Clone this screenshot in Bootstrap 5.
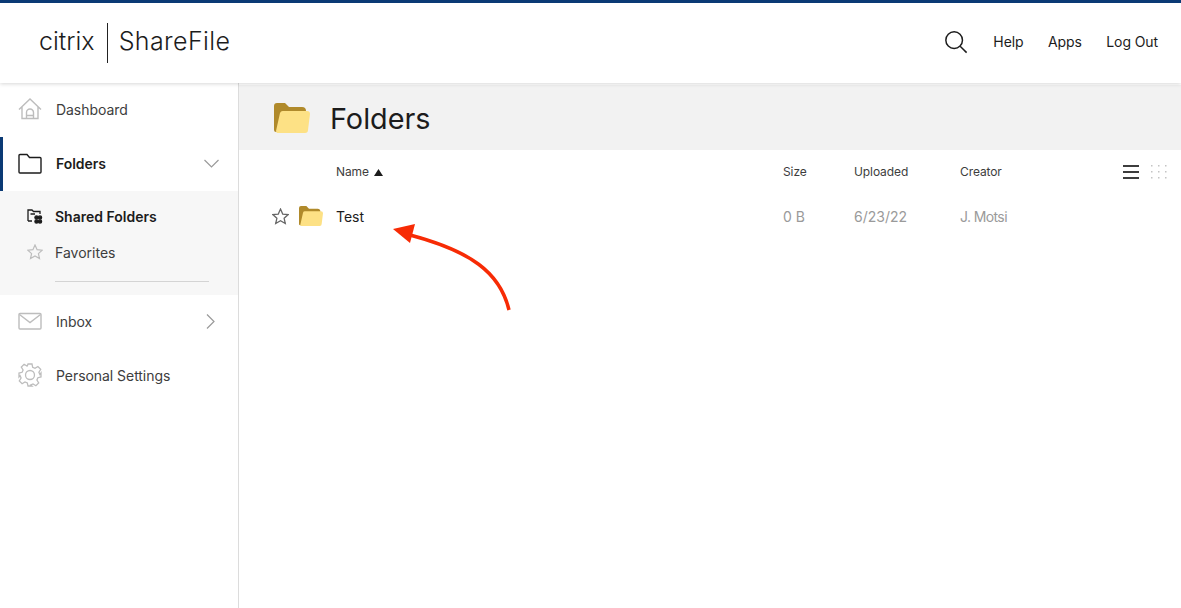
<!DOCTYPE html>
<html lang="en">
<head>
<meta charset="utf-8" />
<meta name="viewport" content="width=device-width, initial-scale=1" />
<title>ShareFile</title>
<link href="https://cdn.jsdelivr.net/npm/bootstrap@5.3.3/dist/css/bootstrap.min.css" rel="stylesheet" />
<style>
  html, body { height: 100%; overflow: hidden; }
  body { font-family: Inter, "Liberation Sans", sans-serif; font-size: 14px; color: #1c1c1c; background: #fff; }
  .sf-page { position: relative; height: 608px; }
  .sf-top { height: 83px; border-top: 3px solid #0b3a75; padding: 0 23px 4px 39px; box-shadow: 0 1px 4px rgba(0,0,0,.16); position: relative; z-index: 2; background: #fff; }
  .sf-citrix { font-size: 25px; font-weight: 300; letter-spacing: 0; line-height: 1; }
  .sf-divider { width: 1px; height: 40px; background: #222; margin: 4px 11px 0 12px; }
  .sf-product { font-size: 25px; font-weight: 300; line-height: 1; letter-spacing: .4px; }
  .sf-toplinks { gap: 24.500px; letter-spacing: -.1px; }
  .sf-toplinks a { color: #1c1c1c; text-decoration: none; }
  .sf-search { margin: 2px 1px 0 0; }
  .sf-body { height: 525px; }
  .sf-side { width: 239px; flex: none; border-right: 1px solid #dcdcdc; }
  .sf-item { height: 54px; padding: 0 19px 2px 18px; color: #3d3d3d; text-decoration: none; letter-spacing: -.05px; }
  .sf-item svg.sf-ico { width: 24px; height: 24px; margin-right: 14px; flex: none; }
  .sf-item.sf-on { box-shadow: inset 3px 0 0 #0b3a75; color: #1c1c1c; font-weight: 600; }
  .sf-chev-r { margin-right: 4px; }
  .sf-sub { background: #f7f7f7; height: 104px; padding: 8px 29px 0 27px; }
  .sf-subitem { height: 36px; padding-bottom: 2px; color: #3d3d3d; }
  .sf-subitem svg { width: 16px; height: 16px; margin-right: 12px; flex: none; }
  .sf-subitem.sf-on { color: #1c1c1c; font-weight: 600; }
  .sf-rule { margin: 10px 0 0 28px; border-top: 1px solid #d4d4d4; }
  .sf-titlebar { height: 65px; margin-top: 2px; padding-left: 35px; background: #f2f2f2; }
  .sf-titlebar h1 { font-size: 28.800px; font-weight: 400; margin: 4px 0 0 20px; color: #1c1c1c; }
  .sf-cols { display: grid; grid-template-columns: 97px 447px 71px 106px 1fr; align-items: center; padding-right: 13px; }
  .sf-head { height: 44px; font-size: 12px; color: #3d3d3d; letter-spacing: -.1px; }
  .sf-sort { margin-left: 2px; }
  .sf-viewbtns { gap: 11px; }
  .sf-row { height: 44px; color: #9a9a9a; }
  .sf-row .sf-name { color: #1c1c1c; }
  .sf-rowicons { padding-left: 33px; gap: 10px; }
  .sf-creator { letter-spacing: -.6px; }
  .sf-arrow { position: absolute; left: 385px; top: 220px; width: 130px; height: 95px; }
</style>
</head>
<body>
<div class="sf-page">
  <header class="sf-top d-flex align-items-center justify-content-between">
    <div class="d-flex align-items-center">
      <span class="sf-citrix">citrix</span>
      <span class="sf-divider"></span>
      <span class="sf-product">ShareFile</span>
    </div>
    <div class="sf-toplinks d-flex align-items-center">
      <svg class="sf-search" width="24" height="24" viewBox="0 0 26 26" fill="none" stroke="#1c1c1c" stroke-width="1.600"><circle cx="11" cy="11" r="9"/><path d="M17.500 17.500l7 7"/></svg>
      <a href="#">Help</a>
      <a href="#">Apps</a>
      <a href="#">Log Out</a>
    </div>
  </header>
  <div class="sf-body d-flex">
    <nav class="sf-side">
      <a class="sf-item d-flex align-items-center" href="#">
        <svg class="sf-ico" viewBox="0 0 24 24" fill="none" stroke="#bdbdbd" stroke-width="1.400"><path d="M1 12.500L12 2l11 10.500M4 10v11.500h16V10M8.500 21.500v-6a3.500 3.500 0 0 1 7 0v6M8.500 18.500h7"/></svg>
        Dashboard
      </a>
      <a class="sf-item sf-on d-flex align-items-center" href="#">
        <svg class="sf-ico" viewBox="0 0 24 24" fill="none" stroke="#1c1c1c" stroke-width="1.400"><path d="M1 4.500a1 1 0 0 1 1-1h7l2.500 3H22a1 1 0 0 1 1 1V21a1 1 0 0 1-1 1H2a1 1 0 0 1-1-1z"/></svg>
        <span class="flex-grow-1">Folders</span>
        <svg width="15" height="9" viewBox="0 0 15 9" fill="none" stroke="#9a9a9a" stroke-width="1.200"><path d="M.500 1l7 7 7-7"/></svg>
      </a>
      <div class="sf-sub">
        <div class="sf-subitem sf-on d-flex align-items-center">
          <svg viewBox="0 0 16 16" fill="none" stroke="#1c1c1c" stroke-width="1.300"><path d="M1 13V2h4l1.500 1.500H13V6M1 13h4M3.500 6H8"/><circle cx="9.500" cy="9.500" r="1.600" fill="#1c1c1c"/><circle cx="13" cy="9.500" r="1.600" fill="#1c1c1c"/><circle cx="9.500" cy="13.500" r="1.600" fill="#1c1c1c"/><circle cx="13" cy="13.500" r="1.600" fill="#1c1c1c"/></svg>
          Shared Folders
        </div>
        <div class="sf-subitem d-flex align-items-center">
          <svg viewBox="0 0 16 16" fill="none" stroke="#bdbdbd" stroke-width="1.200"><path d="M8 1l2.100 4.700 5.100.5-3.800 3.400 1.100 5L8 12l-4.500 2.600 1.100-5L.800 6.200l5.100-.5z"/></svg>
          Favorites
        </div>
        <div class="sf-rule"></div>
      </div>
      <a class="sf-item d-flex align-items-center" href="#">
        <svg class="sf-ico" viewBox="0 0 24 24" fill="none" stroke="#bdbdbd" stroke-width="1.400"><rect x="1" y="4.500" width="22" height="15.500" rx="1"/><path d="M1.500 5.500L12 13.500l10.500-8"/></svg>
        <span class="flex-grow-1">Inbox</span>
        <svg class="sf-chev-r" width="9" height="15" viewBox="0 0 9 15" fill="none" stroke="#9a9a9a" stroke-width="1.200"><path d="M1 .500l7 7-7 7"/></svg>
      </a>
      <a class="sf-item d-flex align-items-center" href="#">
        <svg class="sf-ico" viewBox="0 0 24 24" fill="none" stroke="#bdbdbd" stroke-width="1.300"><circle cx="12" cy="12" r="4.500"/><path d="M10 1h4l.7 3.300 2.300 1 2.900-1.800 2.800 2.800-1.800 2.900 1 2.300L23 10v4l-3.100.7-1 2.300 1.800 2.900-2.800 2.800-2.900-1.800-2.300 1L14 23h-4l-.7-3.100-2.300-1-2.900 1.800-2.800-2.800 1.800-2.900-1-2.300L1 14v-4l3.100-.7 1-2.300-1.800-2.900 2.800-2.800L9 3.100l.3-.1z"/></svg>
        Personal Settings
      </a>
    </nav>
    <main class="flex-grow-1">
      <div class="sf-titlebar d-flex align-items-center">
        <svg width="36" height="30" viewBox="0 0 36 30"><path d="M0 3a3 3 0 0 1 3-3h8l4 4h13a4 4 0 0 1 4 4v2H8L3 29H2a2 2 0 0 1-2-2z" fill="#b08a2b"/><path d="M6 10a3 3 0 0 1 3-2h24a3 3 0 0 1 3 3l-2 16a3 3 0 0 1-3 3H3a3 3 0 0 1-1-2z" fill="#fde185"/></svg>
        <h1>Folders</h1>
      </div>
      <div class="sf-cols sf-head">
        <span></span>
        <span>Name <svg class="sf-sort align-baseline" width="9" height="7" viewBox="0 0 9 7"><path d="M4.500 0L9 7H0z" fill="#1c1c1c"/></svg></span>
        <span>Size</span>
        <span>Uploaded</span>
        <div class="d-flex align-items-center justify-content-between">
          <span>Creator</span>
          <span class="sf-viewbtns d-flex align-items-center">
            <svg width="16" height="16" viewBox="0 0 16 16" fill="#3d3d3d"><rect y="1" width="16" height="2"/><rect y="7" width="16" height="2"/><rect y="13" width="16" height="2"/></svg>
            <svg width="18" height="16" viewBox="0 0 18 16" fill="#c4c4c4"><rect x="1" y="1" width="1.500" height="1.500"/><rect x="8" y="1" width="1.500" height="1.500"/><rect x="15" y="1" width="1.500" height="1.500"/><rect x="1" y="7" width="1.500" height="1.500"/><rect x="8" y="7" width="1.500" height="1.500"/><rect x="15" y="7" width="1.500" height="1.500"/><rect x="1" y="13" width="1.500" height="1.500"/><rect x="8" y="13" width="1.500" height="1.500"/><rect x="15" y="13" width="1.500" height="1.500"/></svg>
          </span>
        </div>
      </div>
      <div class="sf-cols sf-row">
        <span class="sf-rowicons d-flex align-items-center">
          <svg class="flex-shrink-0" width="17" height="17" viewBox="0 0 16 16" fill="none" stroke="#666" stroke-width="1.200"><path d="M8 1l2.100 4.700 5.100.5-3.800 3.400 1.100 5L8 12l-4.500 2.600 1.100-5L.800 6.200l5.100-.5z"/></svg>
          <svg class="flex-shrink-0" width="24" height="20" viewBox="0 0 36 30"><path d="M0 3a3 3 0 0 1 3-3h8l4 4h13a4 4 0 0 1 4 4v2H8L3 29H2a2 2 0 0 1-2-2z" fill="#b08a2b"/><path d="M6 10a3 3 0 0 1 3-2h24a3 3 0 0 1 3 3l-2 16a3 3 0 0 1-3 3H3a3 3 0 0 1-1-2z" fill="#fde185"/></svg>
        </span>
        <span class="sf-name">Test</span>
        <span>0 B</span>
        <span>6/23/22</span>
        <span class="sf-creator">J. Motsi</span>
      </div>
    </main>
  </div>
  <svg class="sf-arrow" viewBox="385 220 130 95">
    <path d="M509 310C500 272 470 251 410 235" fill="none" stroke="#f72b05" stroke-width="3.500"/>
    <path d="M393 229L415 224 410 243z" fill="#f72b05"/>
  </svg>
</div>
<script src="https://cdn.jsdelivr.net/npm/bootstrap@5.3.3/dist/js/bootstrap.bundle.min.js"></script>
</body>
</html>
